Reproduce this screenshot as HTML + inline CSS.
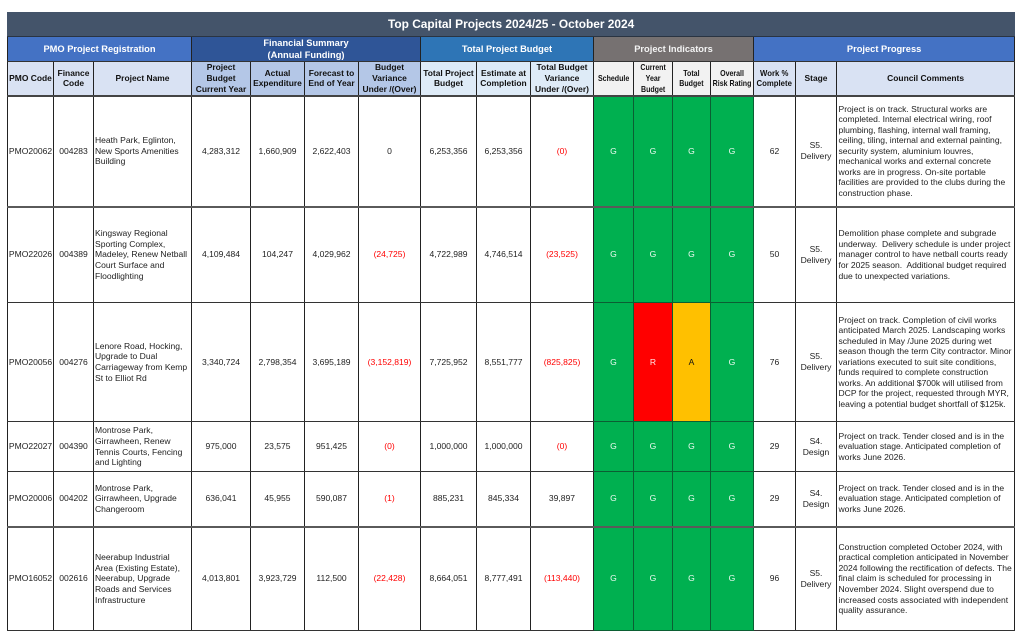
<!DOCTYPE html>
<html lang="en">
<head>
<meta charset="utf-8">
<title>Top Capital Projects 2024/25 - October 2024</title>
<style>
html,body{margin:0;padding:0;background:#fff;width:1021px;height:635px;overflow:hidden}
table{position:absolute;left:7px;top:12px;width:1007px;border-collapse:collapse;table-layout:fixed;font-family:"Liberation Sans",sans-serif;font-size:8.55px;line-height:10.55px;color:#222;filter:blur(.3px)}
td{border:1px solid #222;border-top-color:#333;border-bottom-color:#333;padding:0;text-align:center;vertical-align:middle;white-space:nowrap;overflow:visible}
.t{background:#44546a;color:#fff;font-weight:bold;font-size:11.9px;border-color:#44546a;border-bottom-color:#2a3442}
.g{color:#fff;font-weight:bold;font-size:9.3px;line-height:12px}
.h{font-weight:bold;color:#111;font-size:8.45px}
.a{background:#d9e2f3}.b{background:#b4c7e7}.c{background:#deebf7}.d{background:#f2f2f2}
.l{text-align:left;padding-left:1px}
.m{text-align:left;padding-left:1.5px}
.r{color:#ff0000}
.G,.R,.A{color:#eefaf2;border-color:#0b5f33}
.G{background:#00b050}.R{background:#ff0000;color:#ffe8e8}.A{background:#ffc000;color:#111}
.n{display:inline-block;transform:scaleX(.84);font-size:8.4px;font-weight:bold;color:#111;margin:0 -12px}
.w{display:inline-block;transform:scaleX(.92);margin:0 -6px}
.x td{border-bottom:2px solid #5a5a5a}
.y td{border-bottom:2px solid #444}
</style>
</head>
<body>
<table>
<colgroup>
<col style="width:46px"><col style="width:40px"><col style="width:98px"><col style="width:59px"><col style="width:54px"><col style="width:54px"><col style="width:62px"><col style="width:56px"><col style="width:54px"><col style="width:63px"><col style="width:40px"><col style="width:39px"><col style="width:38px"><col style="width:43px"><col style="width:42px"><col style="width:41px"><col style="width:178px">
</colgroup>
<tr style="height:24px"><td class="t" colspan="17">Top Capital Projects 2024/25 - October 2024</td></tr>
<tr style="height:25px">
<td class="g" colspan="3" style="background:#4472c4">PMO Project Registration</td>
<td class="g" colspan="4" style="background:#2f5597">Financial Summary<br>(Annual Funding)</td>
<td class="g" colspan="3" style="background:#2e75b6">Total Project Budget</td>
<td class="g" colspan="4" style="background:#767171;color:#f4f4f4">Project Indicators</td>
<td class="g" colspan="3" style="background:#4472c4">Project Progress</td>
</tr>
<tr style="height:34px" class="y">
<td class="h a">PMO Code</td><td class="h a">Finance<br>Code</td><td class="h a">Project Name</td>
<td class="h b">Project<br>Budget<br>Current Year</td><td class="h b">Actual<br>Expenditure</td><td class="h b">Forecast to<br>End of Year</td><td class="h b">Budget<br>Variance<br>Under /(Over)</td>
<td class="h c">Total Project<br>Budget</td><td class="h c">Estimate at<br>Completion</td><td class="h c">Total Budget<br>Variance<br>Under /(Over)</td>
<td class="d"><span class="n">Schedule</span></td><td class="d"><span class="n">Current<br>Year<br>Budget</span></td><td class="d"><span class="n">Total<br>Budget</span></td><td class="d"><span class="n">Overall<br>Risk Rating</span></td>
<td class="h a"><span class="w">Work %<br>Complete</span></td><td class="h a">Stage</td><td class="h a">Council Comments</td>
</tr>
<tr style="height:111px" class="x">
<td>PMO20062</td><td>004283</td><td class="l">Heath Park, Eglinton,<br>New Sports Amenities<br>Building</td>
<td>4,283,312</td><td>1,660,909</td><td>2,622,403</td><td>0</td><td>6,253,356</td><td>6,253,356</td><td class="r">(0)</td>
<td class="G">G</td><td class="G">G</td><td class="G">G</td><td class="G">G</td>
<td>62</td><td>S5.<br>Delivery</td>
<td class="m">Project is on track. Structural works are<br>completed. Internal electrical wiring, roof<br>plumbing, flashing, internal wall framing,<br>ceiling, tiling, internal and external painting,<br>security system, aluminium louvres,<br>mechanical works and external concrete<br>works are in progress. On-site portable<br>facilities are provided to the clubs during the<br>construction phase.</td>
</tr>
<tr style="height:96px">
<td>PMO22026</td><td>004389</td><td class="l">Kingsway Regional<br>Sporting Complex,<br>Madeley, Renew Netball<br>Court Surface and<br>Floodlighting</td>
<td>4,109,484</td><td>104,247</td><td>4,029,962</td><td class="r">(24,725)</td><td>4,722,989</td><td>4,746,514</td><td class="r">(23,525)</td>
<td class="G">G</td><td class="G">G</td><td class="G">G</td><td class="G">G</td>
<td>50</td><td>S5.<br>Delivery</td>
<td class="m">Demolition phase complete and subgrade<br>underway.&nbsp; Delivery schedule is under project<br>manager control to have netball courts ready<br>for 2025 season.&nbsp; Additional budget required<br>due to unexpected variations.</td>
</tr>
<tr style="height:119px">
<td>PMO20056</td><td>004276</td><td class="l">Lenore Road, Hocking,<br>Upgrade to Dual<br>Carriageway from Kemp<br>St to Elliot Rd</td>
<td>3,340,724</td><td>2,798,354</td><td>3,695,189</td><td class="r">(3,152,819)</td><td>7,725,952</td><td>8,551,777</td><td class="r">(825,825)</td>
<td class="G">G</td><td class="R">R</td><td class="A">A</td><td class="G">G</td>
<td>76</td><td>S5.<br>Delivery</td>
<td class="m">Project on track. Completion of civil works<br>anticipated March 2025. Landscaping works<br>scheduled in May /June 2025 during wet<br>season though the term City contractor. Minor<br>variations executed to suit site conditions,<br>funds required to complete construction<br>works. An additional $700k will utilised from<br>DCP for the project, requested through MYR,<br>leaving a potential budget shortfall of $125k.</td>
</tr>
<tr style="height:50px">
<td>PMO22027</td><td>004390</td><td class="l">Montrose Park,<br>Girrawheen, Renew<br>Tennis Courts, Fencing<br>and Lighting</td>
<td>975,000</td><td>23,575</td><td>951,425</td><td class="r">(0)</td><td>1,000,000</td><td>1,000,000</td><td class="r">(0)</td>
<td class="G">G</td><td class="G">G</td><td class="G">G</td><td class="G">G</td>
<td>29</td><td>S4.<br>Design</td>
<td class="m">Project on track. Tender closed and is in the<br>evaluation stage. Anticipated completion of<br>works June 2026.</td>
</tr>
<tr style="height:55px" class="x">
<td>PMO20006</td><td>004202</td><td class="l">Montrose Park,<br>Girrawheen, Upgrade<br>Changeroom</td>
<td>636,041</td><td>45,955</td><td>590,087</td><td class="r">(1)</td><td>885,231</td><td>845,334</td><td>39,897</td>
<td class="G">G</td><td class="G">G</td><td class="G">G</td><td class="G">G</td>
<td>29</td><td>S4.<br>Design</td>
<td class="m">Project on track. Tender closed and is in the<br>evaluation stage. Anticipated completion of<br>works June 2026.</td>
</tr>
<tr style="height:104px">
<td>PMO16052</td><td>002616</td><td class="l">Neerabup Industrial<br>Area (Existing Estate),<br>Neerabup, Upgrade<br>Roads and Services<br>Infrastructure</td>
<td>4,013,801</td><td>3,923,729</td><td>112,500</td><td class="r">(22,428)</td><td>8,664,051</td><td>8,777,491</td><td class="r">(113,440)</td>
<td class="G">G</td><td class="G">G</td><td class="G">G</td><td class="G">G</td>
<td>96</td><td>S5.<br>Delivery</td>
<td class="m">Construction completed October 2024, with<br>practical completion anticipated in November<br>2024 following the rectification of defects. The<br>final claim is scheduled for processing in<br>November 2024. Slight overspend due to<br>increased costs associated with independent<br>quality assurance.</td>
</tr>
</table>
</body>
</html>
